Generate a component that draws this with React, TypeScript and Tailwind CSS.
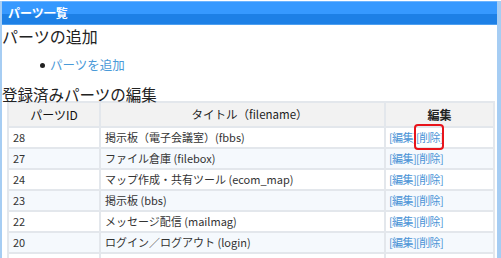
import React from 'react';

const rows = [
    { id: '28', title: '掲示板（電子会議室）(fbbs)' },
    { id: '27', title: 'ファイル倉庫 (filebox)' },
    { id: '24', title: 'マップ作成・共有ツール (ecom_map)' },
    { id: '23', title: '掲示板 (bbs)' },
    { id: '22', title: 'メッセージ配信 (mailmag)' },
    { id: '20', title: 'ログイン／ログアウト (login)' },
];

export default function App() {
    return (
        <div className="w-[501px] h-[258px] overflow-hidden bg-white font-['Noto_Sans_CJK_JP','Noto_Sans',sans-serif] text-[#222]">
            <div className="h-full border-l-2 border-r-4 border-[#a6cdf3]">
                {/* Title bar */}
                <div className="mt-[1px] h-[24px] border-t border-[#6cb4ff] border-b border-b-[#4d9ff0] bg-[linear-gradient(#3699ff_0_54%,#1d80e6_54%)] flex items-center pl-[6px]">
                    <span className="text-white text-[12px] font-bold leading-none">パーツ一覧</span>
                </div>

                <h2 className="mt-[1px] text-[16px] leading-[20px] text-[#222]">パーツの追加</h2>
                <ul className="mt-[10px] leading-[18px]">
                    <li className="flex items-center pl-[38px]">
                        <span className="w-[5px] h-[5px] rounded-full bg-[#222] mr-[5px]" />
                        <a href="#" className="text-[12.5px] text-[#4a9ad8]">パーツを追加</a>
                    </li>
                </ul>

                <h2 className="mt-[13px] text-[15.5px] leading-[14px] text-[#222]">登録済みパーツの編集</h2>

                <table className="ml-[5px] w-[486px] border-collapse table-fixed text-[11px] text-[#333]">
                    <colgroup>
                        <col className="w-[92px]" />
                        <col className="w-[285px]" />
                        <col className="w-[109px]" />
                    </colgroup>
                    <thead>
                        <tr className="h-[25px] bg-[#f2f2f2]">
                            <th className="border-2 border-[#e3e7ec] font-normal text-[12px] text-[#111]">パーツID</th>
                            <th className="border-2 border-[#e3e7ec] font-normal text-[11.5px] text-[#222] pl-[14px]">タイトル（filename）</th>
                            <th className="border-2 border-[#e3e7ec] font-bold text-[12px] text-[#222]">編集</th>
                        </tr>
                    </thead>
                    <tbody>
                        {rows.map((row, i) => (
                            <tr key={row.id} className={`h-[21px] ${i % 2 === 1 ? 'bg-[#f5f9fd]' : 'bg-white'}`}>
                                <td className="border-2 border-[#e3e7ec] pl-[4px]">{row.id}</td>
                                <td className="border-2 border-[#e3e7ec] pl-[4px] whitespace-nowrap">{row.title}</td>
                                <td className="border-2 border-[#e3e7ec] pl-[3px] text-[#4a93d6] whitespace-nowrap tracking-[-0.6px]">
                                    <a href="#">[編集]</a>
                                    <span className="relative">
                                        <a href="#">[削除]</a>
                                        {i === 0 && (
                                            <span className="absolute left-[-2px] right-[-1px] top-[-5px] bottom-[-5px] border-[2.5px] border-[#e8141b] rounded-[4px]" />
                                        )}
                                    </span>
                                </td>
                            </tr>
                        ))}
                        <tr className="h-[21px] bg-white">
                            <td className="border-2 border-[#e3e7ec]" />
                            <td className="border-2 border-[#e3e7ec]" />
                            <td className="border-2 border-[#e3e7ec]" />
                        </tr>
                    </tbody>
                </table>
            </div>
        </div>
    );
}
